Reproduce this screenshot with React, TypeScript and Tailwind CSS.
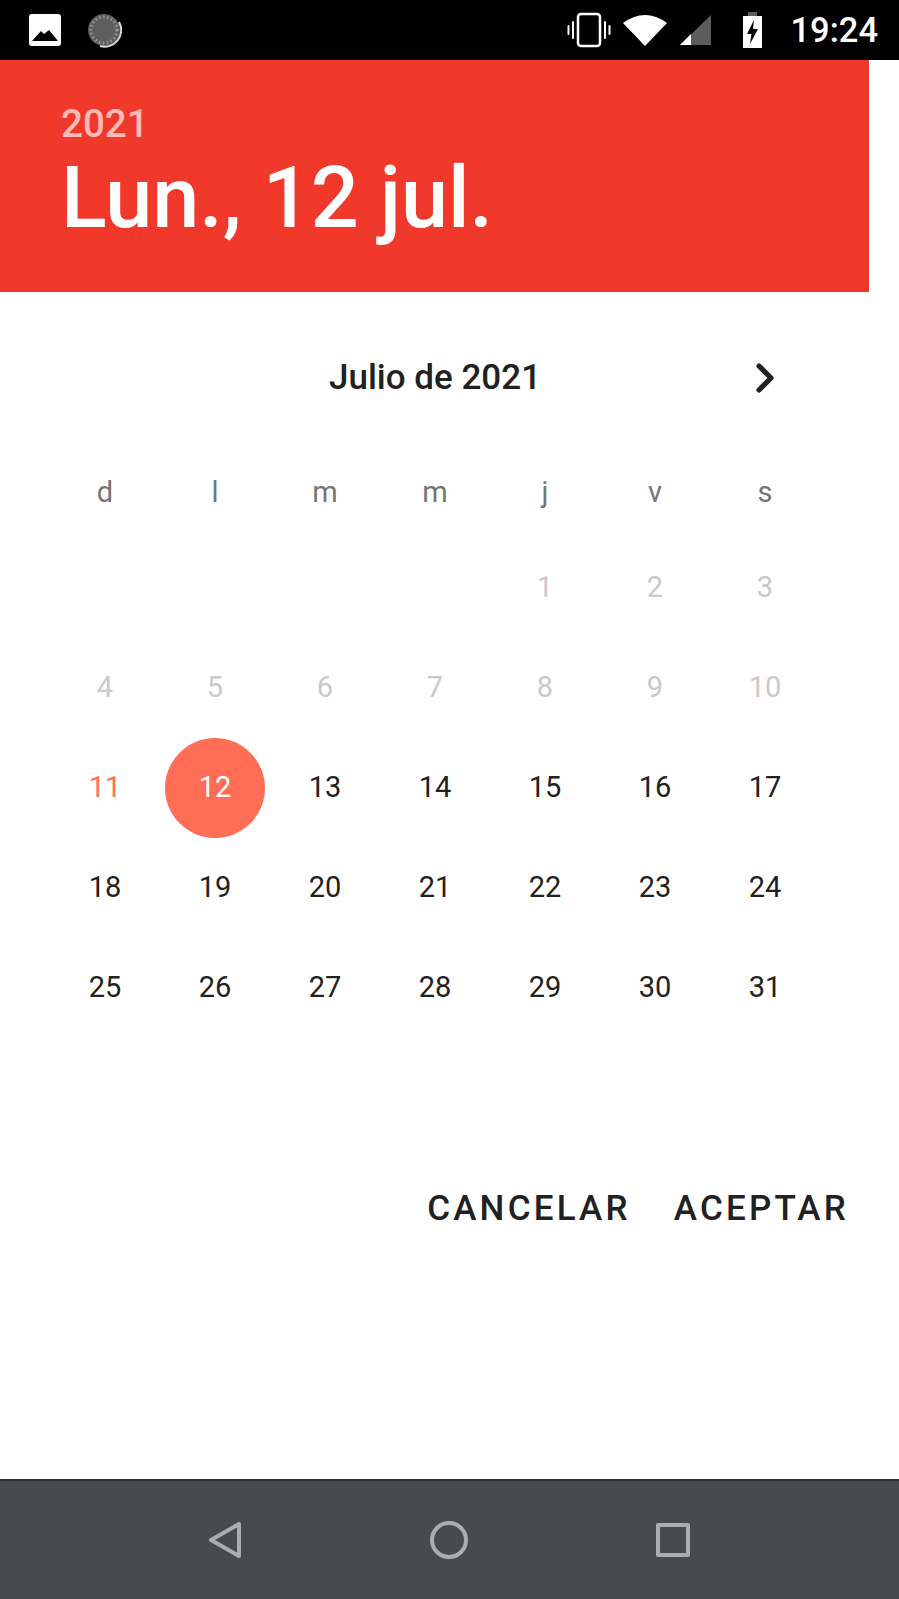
import { ChevronRight } from "lucide-react";

const weekDays = ["d", "l", "m", "m", "j", "v", "s"];

function StatusBar() {
  return (
    <div className="flex h-[60px] items-center justify-between bg-black pl-[29px] pr-[21px]">
      <div className="flex items-center gap-[25px]">
        <svg width="32" height="32" viewBox="0 0 32 32">
          <rect width="32" height="32" rx="3" fill="#fff" />
          <path d="M3 27 L12 17 L15 20 L20 16 L29 27 Z" fill="#000" />
        </svg>
        <svg width="36" height="36" viewBox="0 0 36 36">
          <circle cx="18" cy="18" r="16" fill="#5e5e5e" />
          <circle cx="18" cy="18" r="13" fill="none" stroke="#9a9a9a" strokeWidth="3" strokeDasharray="1.5 2.5" />
          <path d="M33 10 A16.5 16.5 0 0 1 14 34" fill="none" stroke="#d8d8d8" strokeWidth="2" />
        </svg>
      </div>
      <div className="flex items-center">
        <svg width="44" height="36" viewBox="0 0 44 36" fill="none" stroke="#fff" strokeLinecap="round">
          <rect x="11" y="2" width="22" height="32" rx="3" strokeWidth="2.5" />
          <path d="M6 10v16M1.500 14v8M38 10v16M42.500 14v8" strokeWidth="2" />
        </svg>
        <svg className="ml-[12px]" width="44" height="32" viewBox="0 0 44 32">
          <path d="M0 9 Q22 -7 44 9 L22 32 Z" fill="#fff" />
        </svg>
        <svg className="ml-[13px]" width="31" height="30" viewBox="0 0 31 30">
          <path d="M31 0 V30 H0 Z" fill="#5c5c5c" />
          <path d="M11 19 V30 H0 Z" fill="#fff" />
        </svg>
        <svg className="ml-[32px]" width="19" height="36" viewBox="0 0 19 36">
          <path d="M5 0h9v4H5z" fill="#5c5c5c" />
          <path d="M0 4h19v32H0z" fill="#fff" />
          <path d="M11 8 L4 22 H8.500 L7 32 L15 17 H10 Z" fill="#000" />
        </svg>
        <span className="ml-[28px] text-[34.500px] font-medium leading-none text-white">19:24</span>
      </div>
    </div>
  );
}

function DayCell({ day }: { day: number }) {
  if (day === 12) {
    return (
      <div className="flex h-[100px] items-center justify-center">
        <div className="flex size-[100px] shrink-0 items-center justify-center rounded-full bg-[#ff6e55] text-[29px] text-white">12</div>
      </div>
    );
  }
  let color = "text-[#212121]";
  if (day <= 10) color = "text-[#c9c9c9]";
  if (day === 11) color = "text-[#ff6e55]";
  return <div className={`flex h-[100px] items-center justify-center text-[29px] ${color}`}>{day}</div>;
}

export default function App() {
  const days = Array.from({ length: 31 }, (_, i) => i + 1);

  return (
    <div className="flex h-[1599px] w-[899px] flex-col overflow-hidden bg-white font-['Roboto',sans-serif]">
      <StatusBar />

      <div className="flex h-[232px] w-[869px] flex-col bg-[#f0392b] pl-[61px] pt-[42px] text-white">
        <div className="text-[38.500px] font-medium leading-[44px] text-white/65">2021</div>
        <div className="-mt-px text-[84.500px] font-medium leading-[108px]">Lun., 12 jul.</div>
      </div>

      <div className="relative ml-[50px] flex h-[170px] w-[770px] items-center justify-center pt-[2px]">
        <span className="text-[35px] font-medium text-[#212121]">Julio de 2021</span>
        <ChevronRight className="absolute right-[31px] top-[62px] text-[#212121]" size={48} strokeWidth={2.6} />
      </div>

      <div className="ml-[50px] mt-[8px] grid w-[770px] grid-cols-7 text-center">
        {weekDays.map((d, i) => (
          <div key={i} className="flex h-[46px] items-center justify-center text-[29px] text-[#757575]">{d}</div>
        ))}
      </div>

      <div className="ml-[50px] mt-[22px] grid w-[770px] grid-cols-7">
        {Array.from({ length: 4 }).map((_, i) => <div key={i} />)}
        {days.map(d => <DayCell key={d} day={d} />)}
      </div>

      <div className="mt-[145px] flex justify-end gap-[43px] pr-[50px] text-[35px] font-medium tracking-[3.200px] text-[#212121]">
        <span>CANCELAR</span>
        <span>ACEPTAR</span>
      </div>

      <div className="mt-auto flex h-[120px] items-center gap-[188px] border-t-2 border-[#2c3034] bg-[#444c52] pl-[208px]">
        <svg width="34" height="38" viewBox="0 0 34 38" fill="none" stroke="#a9aeb2" strokeWidth="4" strokeLinejoin="round">
          <path d="M31 3 V35 L3 19 Z" />
        </svg>
        <svg width="38" height="38" viewBox="0 0 38 38" fill="none" stroke="#a9aeb2" strokeWidth="4">
          <circle cx="19" cy="19" r="17" />
        </svg>
        <svg width="34" height="34" viewBox="0 0 34 34" fill="none" stroke="#a9aeb2" strokeWidth="4" strokeLinejoin="round">
          <rect x="2" y="2" width="30" height="30" />
        </svg>
      </div>
    </div>
  );
}
